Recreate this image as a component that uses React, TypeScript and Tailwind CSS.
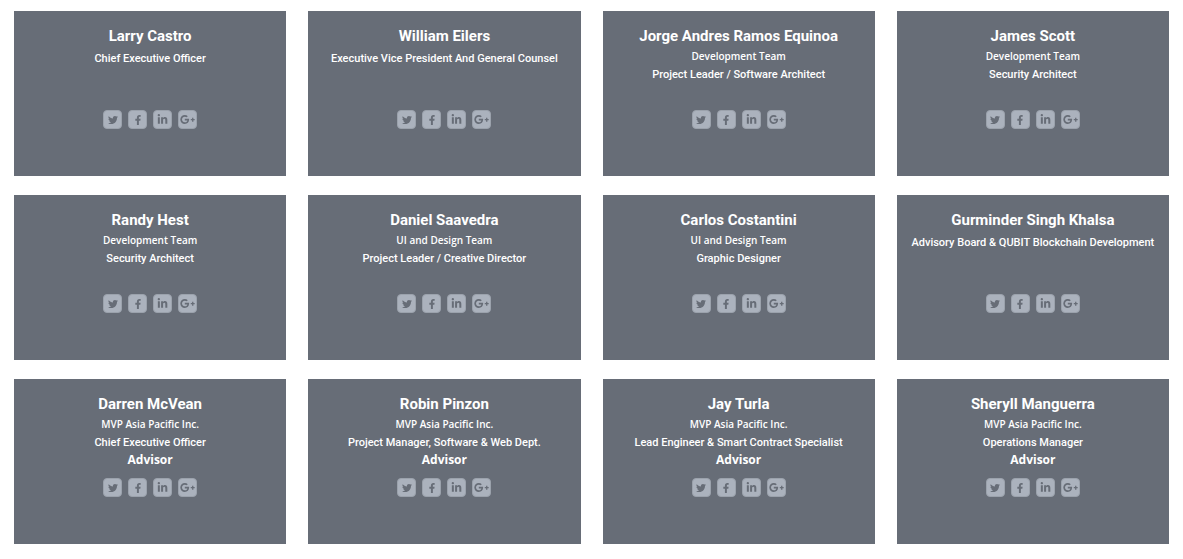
import { FaFacebookF, FaGooglePlusG, FaLinkedinIn, FaTwitter } from "react-icons/fa";

interface Member {
  name: string;
  team?: string;
  role: string;
  advisor?: boolean;
}

const members: Member[] = [
  { name: "Larry Castro", role: "Chief Executive Officer" },
  { name: "William Eilers", role: "Executive Vice President And General Counsel" },
  { name: "Jorge Andres Ramos Equinoa", team: "Development Team", role: "Project Leader / Software Architect" },
  { name: "James Scott", team: "Development Team", role: "Security Architect" },
  { name: "Randy Hest", team: "Development Team", role: "Security Architect" },
  { name: "Daniel Saavedra", team: "UI and Design Team", role: "Project Leader / Creative Director" },
  { name: "Carlos Costantini", team: "UI and Design Team", role: "Graphic Designer" },
  { name: "Gurminder Singh Khalsa", role: "Advisory Board & QUBIT Blockchain Development" },
  { name: "Darren McVean", team: "MVP Asia Pacific Inc.", role: "Chief Executive Officer", advisor: true },
  { name: "Robin Pinzon", team: "MVP Asia Pacific Inc.", role: "Project Manager, Software & Web Dept.", advisor: true },
  { name: "Jay Turla", team: "MVP Asia Pacific Inc.", role: "Lead Engineer & Smart Contract Specialist", advisor: true },
  { name: "Sheryll Manguerra", team: "MVP Asia Pacific Inc.", role: "Operations Manager", advisor: true },
];

const socials = [
  { label: "Twitter", icon: <FaTwitter size={10} /> },
  { label: "Facebook", icon: <FaFacebookF size={10} /> },
  { label: "LinkedIn", icon: <FaLinkedinIn size={11} /> },
  { label: "Google Plus", icon: <FaGooglePlusG size={15} /> },
];

function SocialLinks({ name }: { name: string }) {
  return (
    <div className="flex justify-center gap-[6px]">
      {socials.map((s) => (
        <a
          key={s.label}
          href="#"
          aria-label={`${name} on ${s.label}`}
          className="flex size-[19px] items-center justify-center rounded border border-[#9ba2ac] bg-[#abb2bd] text-[#676d77] hover:bg-white"
        >
          {s.icon}
        </a>
      ))}
    </div>
  );
}

function MemberCard({ member }: { member: Member }) {
  return (
    <article className="min-h-[165px] bg-[#676d77] pt-[14px] pb-8 text-center text-white">
      <div className="min-h-[85px]">
        <h3 className="font-['Roboto',sans-serif] text-[15px] leading-[22px] font-bold">{member.name}</h3>
        {member.team && (
          <p className="font-['Open_Sans',sans-serif] text-[10px] leading-[18px] font-semibold">{member.team}</p>
        )}
        <p
          className={
            member.team
              ? "font-['Roboto',sans-serif] text-[11px] leading-5 font-medium"
              : "mt-[2px] font-['Roboto',sans-serif] text-[11px] leading-5 font-medium"
          }
        >
          {member.role}
        </p>
        {member.advisor && (
          <p className="font-['Open_Sans',sans-serif] text-[12px] leading-[14px] font-bold">Advisor</p>
        )}
      </div>
      <SocialLinks name={member.name} />
    </article>
  );
}

export default function App() {
  return (
    <main className="grid grid-cols-4 gap-x-[22px] gap-y-[19px] bg-white px-[14px] pt-[11px] pb-[15px]">
      {members.map((m) => (
        <MemberCard key={m.name} member={m} />
      ))}
    </main>
  );
}
